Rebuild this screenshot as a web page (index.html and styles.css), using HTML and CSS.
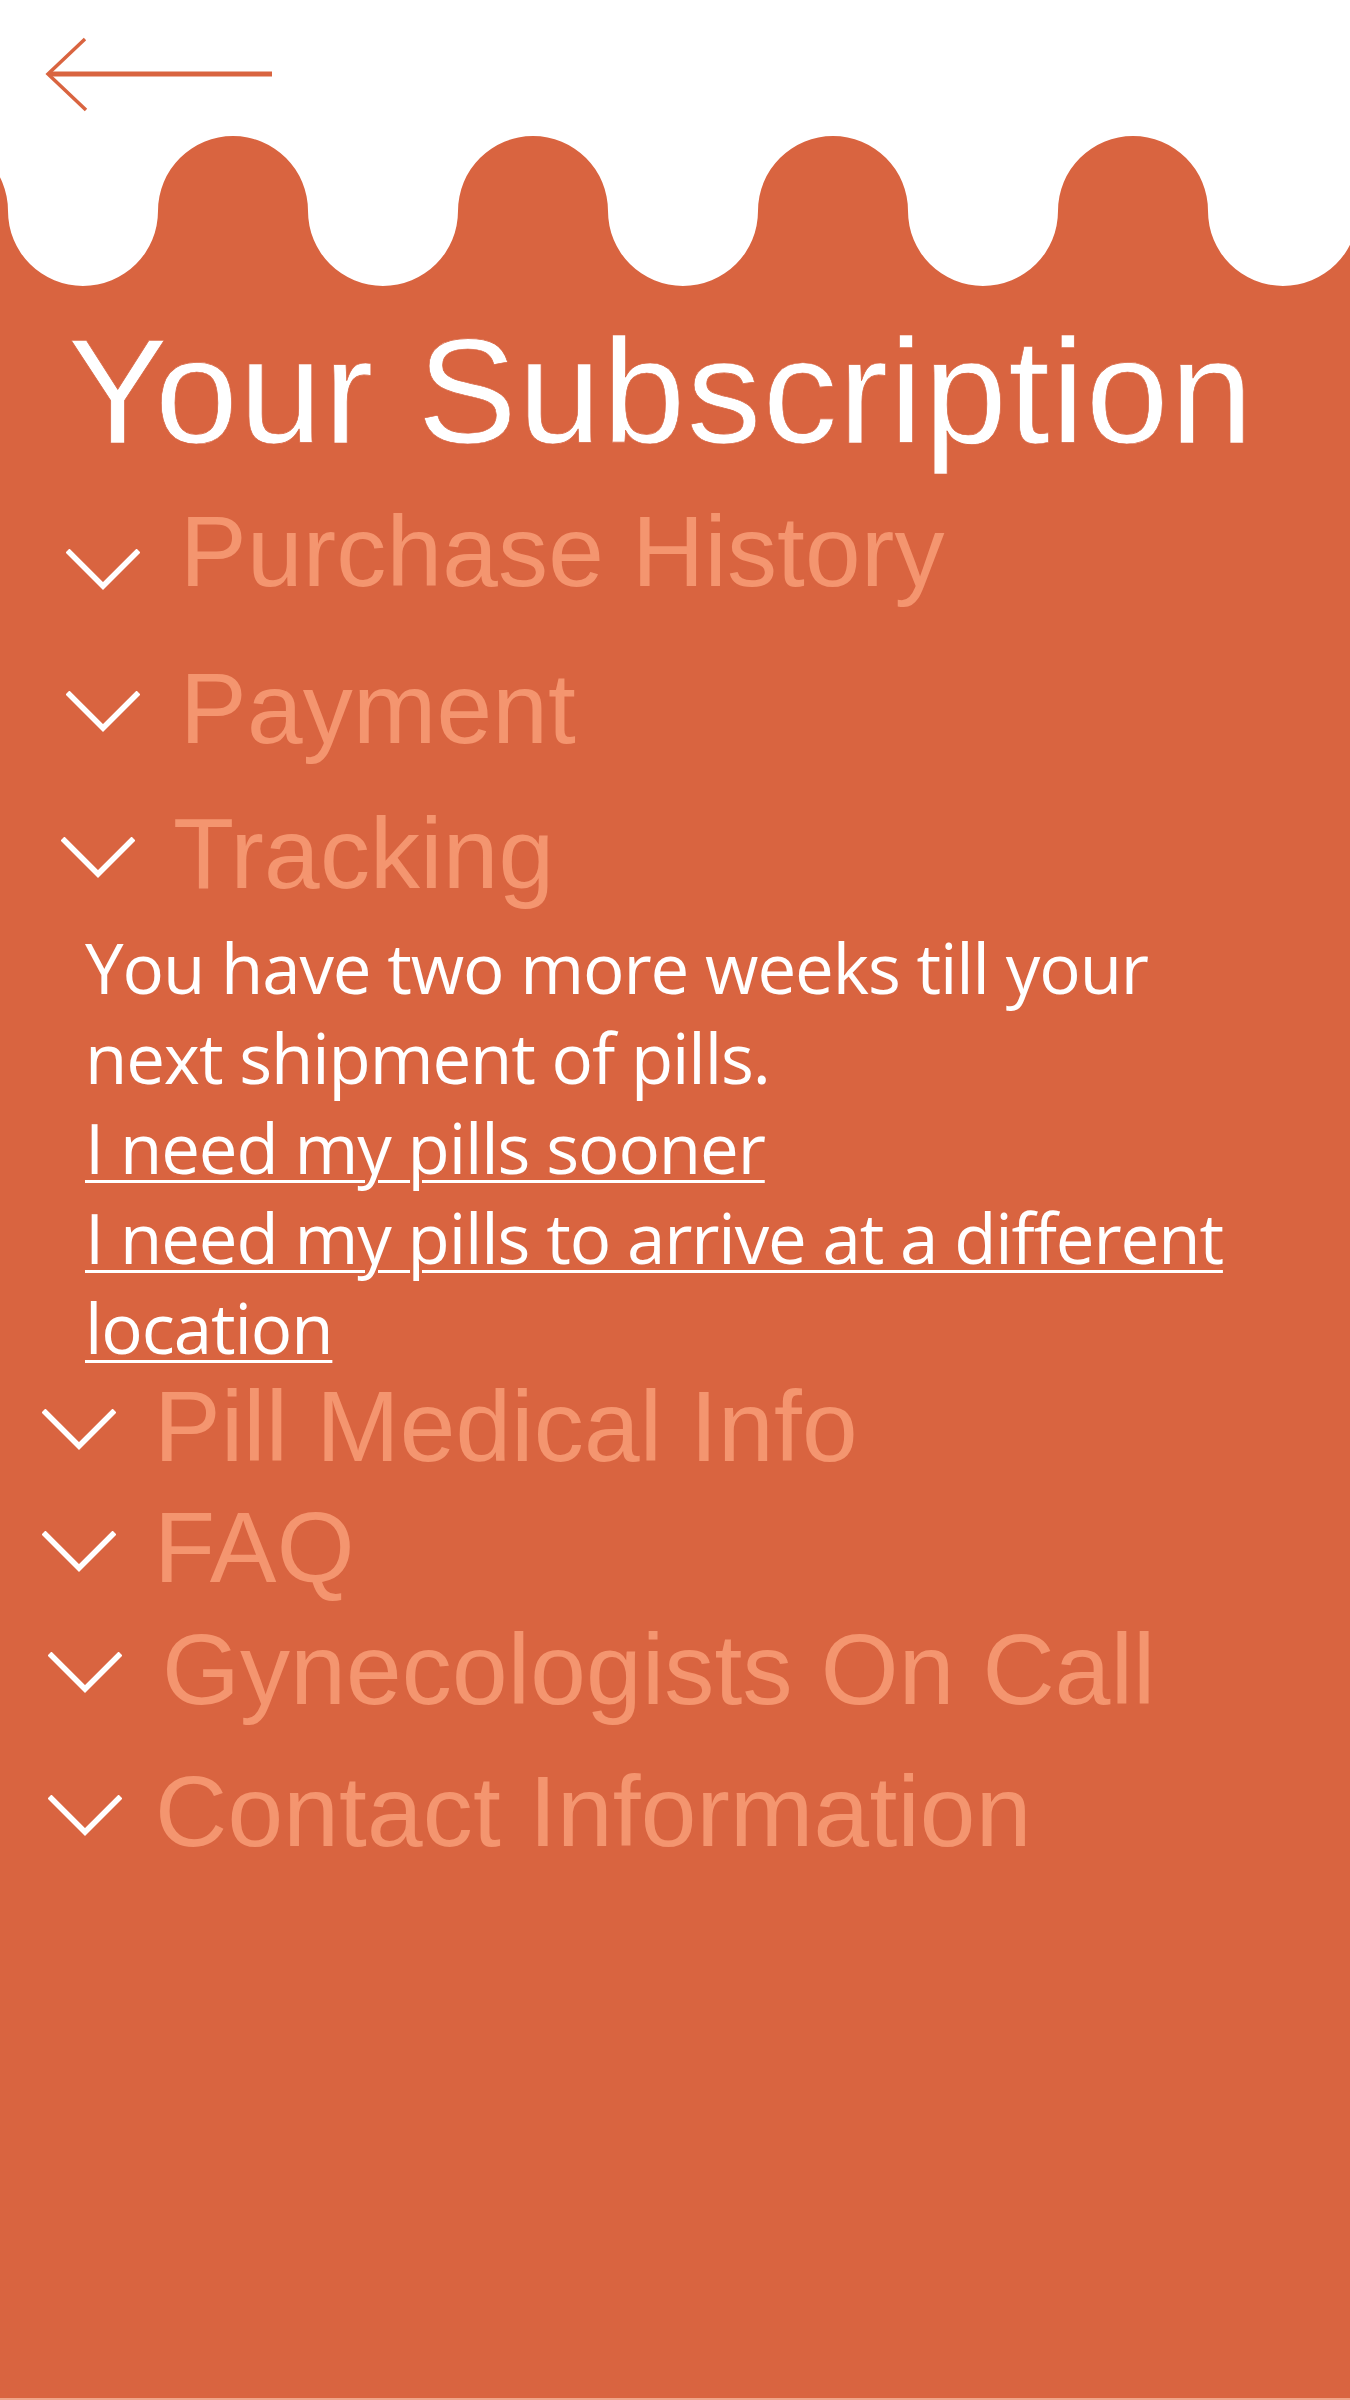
FILE: index.html
```html
<!DOCTYPE html>
<html>
  <head>
    <meta charset="UTF-8" />
    <title>Your Subscription</title>
    <link rel="stylesheet" href="styles.css">
  </head>
  <body>
    <!-- top bar with the back arrow -->
    <header class="top-bar">
      <a class="back-link" href="#">
        <svg class="back-arrow" viewBox="0 0 232 78" width="232" height="78">
          <path class="arrow-head" d="M41 4 L4 39 L42 75" />
          <path class="arrow-shaft" d="M5 39 H228" />
        </svg>
      </a>
    </header>

    <!-- scalloped edge of the panel -->
    <svg class="wave" viewBox="0 0 1350 150" width="1350" height="150">
      <path d="M-142 150 V75 A75 75 0 0 1 8 75 A75 75 0 0 0 158 75 A75 75 0 0 1 308 75 A75 75 0 0 0 458 75 A75 75 0 0 1 608 75 A75 75 0 0 0 758 75 A75 75 0 0 1 908 75 A75 75 0 0 0 1058 75 A75 75 0 0 1 1208 75 A75 75 0 0 0 1358 75 V150 Z" />
    </svg>

    <main class="panel">
      <h1 class="title">Your Subscription</h1>

      <ul class="menu">
        <li class="menu-item item-purchase">
          <div class="menu-row">
            <svg class="chevron" viewBox="0 0 74 42"><polyline points="1.5,1.5 37,37 72.5,1.5" /></svg>
            <span class="menu-label">Purchase History</span>
          </div>
        </li>
        <li class="menu-item item-payment">
          <div class="menu-row">
            <svg class="chevron" viewBox="0 0 74 42"><polyline points="1.5,1.5 37,37 72.5,1.5" /></svg>
            <span class="menu-label">Payment</span>
          </div>
        </li>
        <li class="menu-item item-tracking is-open">
          <div class="menu-row">
            <svg class="chevron" viewBox="0 0 74 42"><polyline points="1.5,1.5 37,37 72.5,1.5" /></svg>
            <span class="menu-label">Tracking</span>
          </div>
          <!-- opened section -->
          <div class="menu-detail">
            <p>You have two more weeks till your<br />next shipment of pills.</p>
            <p><a href="#">I need my pills sooner</a></p>
            <p><a href="#">I need my pills to arrive at a different<br />location</a></p>
          </div>
        </li>
        <li class="menu-item item-pill">
          <div class="menu-row">
            <svg class="chevron" viewBox="0 0 74 42"><polyline points="1.5,1.5 37,37 72.5,1.5" /></svg>
            <span class="menu-label">Pill Medical Info</span>
          </div>
        </li>
        <li class="menu-item item-faq">
          <div class="menu-row">
            <svg class="chevron" viewBox="0 0 74 42"><polyline points="1.5,1.5 37,37 72.5,1.5" /></svg>
            <span class="menu-label">FAQ</span>
          </div>
        </li>
        <li class="menu-item item-gyn">
          <div class="menu-row">
            <svg class="chevron" viewBox="0 0 74 42"><polyline points="1.5,1.5 37,37 72.5,1.5" /></svg>
            <span class="menu-label">Gynecologists On Call</span>
          </div>
        </li>
        <li class="menu-item item-contact">
          <div class="menu-row">
            <svg class="chevron" viewBox="0 0 74 42"><polyline points="1.5,1.5 37,37 72.5,1.5" /></svg>
            <span class="menu-label">Contact Information</span>
          </div>
        </li>
      </ul>
    </main>
  </body>
</html>
```

FILE: styles.css
```css
/* page base */
html,
body {
  background-color: #eea58a; /* thin strip under the panel */
}
body {
  margin: 0;
  font-family: "Liberation Sans", Arial, sans-serif;
}

/* white top bar */
.top-bar {
  height: 136px;
  box-sizing: border-box;
  padding: 35px 0 0 44px;
  background-color: #fff;
}
.back-link {
  display: block;
  width: 232px;
}
.back-arrow {
  display: block;
  fill: none;
  stroke: #d96440;
}
.arrow-head {
  stroke-width: 3.5;
}
.arrow-shaft {
  stroke-width: 5;
}

/* scallops */
.wave {
  display: block;
  background-color: #fff;
  fill: #d96440;
}

/* orange panel */
.panel {
  min-height: 2112px;
  box-sizing: border-box;
  padding-top: 31px;
  background-color: #d96440;
}

.title {
  margin: 0 0 34px;
  padding-left: 68px;
  font-size: 149px;
  line-height: 150px;
  font-weight: normal;
  letter-spacing: 1.4px;
  color: #fff;
  -webkit-text-stroke: 0.7px #d96440; /* a touch lighter, like the light face */
}

/* accordion list */
.menu {
  list-style: none;
  margin: 0;
  padding: 0;
}
.menu-row {
  display: flex;
  align-items: flex-start;
  gap: 40px;
  padding-left: 66px;
  font-size: 100px;
  line-height: 100px;
  letter-spacing: 0.2px;
  color: #f4956f;
  white-space: nowrap;
}
.chevron {
  flex: none;
  width: 74px;
  height: 42px;
  margin-top: 33px;
  fill: none;
  stroke: #fff;
  stroke-width: 5.5;
}

/* each row sits a little differently */
.item-purchase .chevron {
  margin-top: 48px;
}
.item-payment {
  margin-top: 57px;
}
.item-tracking {
  margin-top: 45px;
}
.item-tracking .menu-row {
  padding-left: 61px;
  gap: 38px;
}
.item-tracking .chevron {
  margin-top: 34px;
}
.item-pill {
  margin-top: 4px;
}
.item-pill .menu-row,
.item-faq .menu-row {
  padding-left: 42px;
  gap: 38px;
}
.item-faq {
  margin-top: 21px;
}
.item-faq .chevron {
  margin-top: 34px;
}
.item-gyn {
  margin-top: 22px;
}
.item-gyn .menu-row {
  padding-left: 48px;
  gap: 40px;
}
.item-contact {
  margin-top: 42px;
}
.item-contact .menu-row {
  padding-left: 48px;
  gap: 33px;
}
.item-contact .chevron {
  margin-top: 34px;
}

/* opened tracking text */
.menu-detail {
  margin-top: 19px;
  padding-left: 85px;
  font-family: "Open Sans", "Noto Sans", sans-serif;
  font-size: 69px;
  line-height: 90px;
  letter-spacing: -1.1px;
  color: #fff;
}
.menu-detail p {
  margin: 0;
}
.menu-detail a {
  color: #fff;
  text-decoration: underline;
  text-decoration-thickness: 3px;
  text-underline-offset: 6px;
}
```
